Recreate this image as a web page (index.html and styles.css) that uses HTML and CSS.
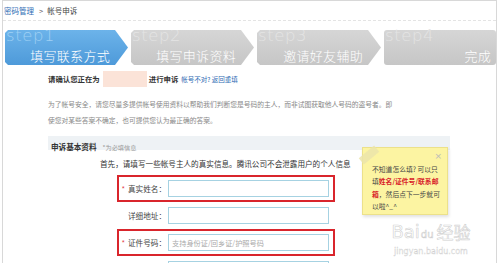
FILE: index.html
```html
<!DOCTYPE html>
<html lang="zh-CN">
<head>
<meta charset="utf-8">
<title>帐号申诉</title>
<link rel="stylesheet" href="styles.css">
</head>
<body>
<div class="frame">
  <div class="crumb"><a class="crumb-link">密码管理</a><span class="crumb-sep">&gt;</span><span>帐号申诉</span></div>
  <div class="steps">
    <div class="step step-active step-1"><span class="step-en">step1</span><span class="step-cn">填写联系方式</span></div>
    <div class="step step-2"><span class="step-en">step2</span><span class="step-cn">填写申诉资料</span></div>
    <div class="step step-3"><span class="step-en">step3</span><span class="step-cn">邀请好友辅助</span></div>
    <div class="step step-last"><span class="step-en">step4</span><span class="step-cn">完成</span></div>
  </div>
  <div class="content">
    <div class="confirm">请确认您正在为<span class="masked"></span>进行申诉<span class="confirm-links">帐号不对? 返回重填</span></div>
    <p class="tip">为了帐号安全，请您尽量多提供帐号使用资料以帮助我们判断您是号码的主人，而非试图获取他人号码的盗号者。即<br>使您对某些答案不确定，也可提供您认为最正确的答案。</p>
    <div class="band"><span class="band-title">申诉基本资料</span><span class="band-note">*为必填信息</span></div>
    <div class="intro">首先，请填写一些帐号主人的真实信息。腾讯公司不会泄露用户的个人信息</div>
    <div class="form">
      <div class="row row-hl"><label class="lbl"><span class="star">*</span>真实姓名：</label><span class="input"></span></div>
      <div class="row"><label class="lbl">详细地址：</label><span class="input"></span></div>
      <div class="row row-hl"><label class="lbl"><span class="star">*</span>证件号码：</label><span class="input"><span class="ph">支持身份证/回乡证/护照号码</span></span></div>
      <div class="row"><label class="lbl"></label><span class="input"></span></div>
    </div>
  </div>
  <div class="note">
    <span class="tape"></span>
    <span class="close">×</span>
    <p class="note-text">不知道怎么填? 可以只<br>填<b>姓名/证件号/联系邮</b><br><b>箱</b>，然后点下一步就可<br>以啦^_^</p>
  </div>
  <div class="watermark">
    <div class="wm-big"><span>Bai</span><span class="wm-paw">du</span><span class="wm-cn">经验</span></div>
    <div class="wm-small">jingyan.baidu.com</div>
  </div>
</div>
</body>
</html>
```
FILE: styles.css
```css
html, body {
  margin: 0;
  padding: 0;
  background: #fff;
}
body {
  width: 500px;
  height: 263px;
  overflow: hidden;
  font-family: "Noto Sans CJK SC", "Noto Sans", sans-serif;
  color: #333;
}
.frame {
  position: relative;
  margin-left: 2px;
  width: 495px;
  height: 263px;
  overflow: hidden;
  box-sizing: border-box;
  border: 1px solid #d8d8d8;
  border-bottom: none;
}
.crumb {
  height: 19px;
  line-height: 19px;
  padding-left: 1px;
  font-size: 7.5px;
  color: #444;
  border-bottom: 1px dashed #e4e4e4;
}
.crumb-link { color: #2f6cb4; }
.crumb-sep { margin: 0 4px 0 5px; color: #666; }

.steps {
  display: flex;
  gap: 3px;
  margin-top: 9px;
  padding-left: 2px;
  height: 35px;
}
.step {
  position: relative;
  height: 35px;
  width: 123px;
  flex: none;
  background: linear-gradient(#d6d6d6, #c6c6c6);
  clip-path: polygon(0 3px, 3px 0, calc(100% - 13px) 0, 100% 50%, calc(100% - 13px) 100%, 3px 100%, 0 calc(100% - 3px));
  color: #e4e4e4;
}
.step-active {
  background: linear-gradient(#6cb3ea, #4e9ad9);
  color: #9fd0f4;
}
.step-3 { width: 124px; }
.step-last {
  width: 112px;
  clip-path: none;
  border-radius: 3px;
}
.step-en {
  position: absolute;
  left: 1px;
  top: -2px;
  font-family: "DejaVu Sans", sans-serif;
  font-weight: 200;
  font-size: 16.5px;
  line-height: 16px;
  letter-spacing: 0.6px;
}
.step-cn {
  position: absolute;
  right: 18px;
  bottom: 2px;
  font-size: 13px;
  line-height: 14px;
  font-weight: 300;
  color: #fff;
  letter-spacing: 0.3px;
}
.step-last .step-cn { right: 5px; }

.content {
  margin-left: 45px;
}
.confirm {
  margin-top: 6px;
  height: 16px;
  line-height: 16px;
  font-size: 7.4px;
  font-weight: bold;
  color: #333;
  display: flex;
  align-items: center;
}
.masked {
  display: inline-block;
  width: 44px;
  height: 16px;
  margin: 0 2px 0 3px;
  background: #fbe3d8;
}
.confirm-links {
  margin-left: 3px;
  font-size: 6.5px;
  font-weight: normal;
  color: #2f6cb4;
}
.tip {
  margin: 9px 0 0;
  font-size: 6.75px;
  line-height: 16px;
  color: #888;
  white-space: nowrap;
}
.band {
  margin-top: 8px;
  width: 402px;
  height: 14px;
  line-height: 14px;
  background: #eef2f5;
  padding-left: 3px;
  box-sizing: border-box;
}
.band-title {
  font-size: 7.6px;
  font-weight: bold;
  color: #333;
}
.band-note {
  margin-left: 6px;
  font-size: 6.2px;
  color: #999;
}
.intro {
  margin-top: 7px;
  padding-left: 52px;
  height: 14px;
  line-height: 14px;
  font-size: 7.6px;
  color: #333;
  white-space: nowrap;
}
.form {
  margin-top: 4px;
  margin-left: 69px;
}
.row {
  display: flex;
  align-items: center;
  width: 218px;
  height: 27px;
  box-sizing: border-box;
  border: 2px solid transparent;
}
.row-hl { border-color: #d9252c; }
.lbl {
  width: 47px;
  flex: none;
  text-align: right;
  font-size: 7.6px;
  color: #444;
  margin-right: 2px;
}
.star { color: #e3444a; margin-right: 3px; }
.input {
  width: 161px;
  height: 17px;
  box-sizing: border-box;
  border: 1.5px solid #a6d2e2;
  background: #fff;
  display: flex;
  align-items: center;
  padding-left: 3px;
}
.ph {
  font-size: 7.2px;
  color: #aaa;
  white-space: nowrap;
}

.note {
  position: absolute;
  left: 359px;
  top: 146px;
  width: 86px;
  height: 68px;
  box-sizing: border-box;
  background: #fcf4a2;
  border: 1px solid #ece18a;
  box-shadow: 1px 2px 3px rgba(0,0,0,0.12);
  padding: 15px 3px 0 9px;
}
.tape {
  position: absolute;
  left: -4px;
  top: 3px;
  width: 20px;
  height: 8px;
  background: rgba(235, 228, 170, 0.85);
  transform: rotate(-40deg);
}
.close {
  position: absolute;
  right: 5px;
  top: 3px;
  font-size: 9px;
  color: #bbb;
  font-family: "DejaVu Sans", sans-serif;
}
.note-text {
  margin: 0;
  font-size: 6.8px;
  line-height: 12.4px;
  color: #444;
  white-space: nowrap;
}
.note-text b { color: #d8232a; }

.watermark {
  position: absolute;
  left: 380px;
  top: 216px;
  width: 96px;
  display: flex;
  flex-direction: column;
  align-items: center;
  pointer-events: none;
}
.wm-big {
  display: flex;
  align-items: center;
  gap: 1px;
  font-family: "DejaVu Sans", sans-serif;
  font-size: 18px;
  line-height: 24px;
  color: rgba(255,255,255,0.9);
  -webkit-text-stroke: 0.6px rgba(175,175,175,0.6);
  white-space: nowrap;
}
.wm-paw {
  font-size: 10px;
  margin-top: 6px;
}
.wm-cn {
  font-family: "Noto Sans CJK SC", sans-serif;
  font-size: 17px;
  margin-left: 2px;
}
.wm-small {
  font-family: "DejaVu Sans", sans-serif;
  font-size: 8px;
  line-height: 10px;
  color: rgba(255,255,255,0.9);
  -webkit-text-stroke: 0.4px rgba(175,175,175,0.6);
  white-space: nowrap;
}
```
